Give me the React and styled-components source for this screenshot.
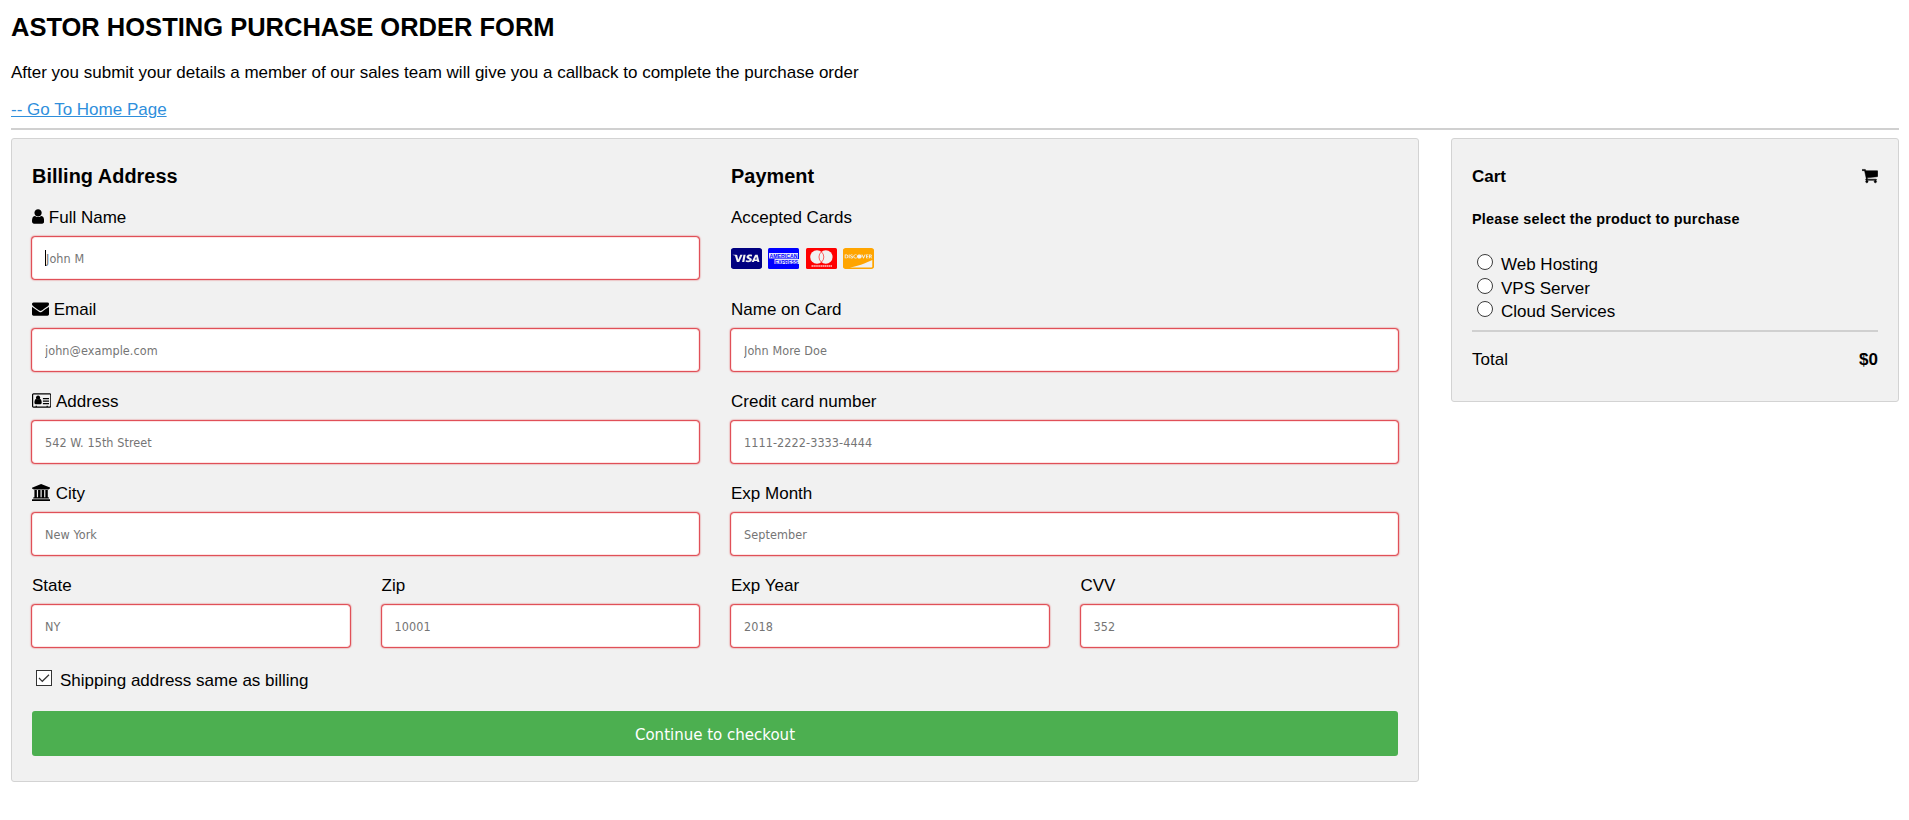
import React from "react";
import styled, { createGlobalStyle } from "styled-components";
import { FaCcVisa, FaCcDiscover } from "react-icons/fa";

const GlobalStyle = createGlobalStyle`
  * { box-sizing: border-box; }
  body {
    margin: 0;
    background: #fff;
    color: #000;
    font-family: Arial, "Liberation Sans", sans-serif;
    font-size: 17px;
    line-height: 20px;
  }
`;

const Page = styled.main`
  padding: 12px 10px 0 11px;
`;

const Title = styled.h2`
  margin: 0 0 21px;
  font-size: 25.5px;
  line-height: 30px;
`;

const Intro = styled.p`
  margin: 0 0 17px;
`;

const HomeLink = styled.a`
  display: block;
  width: max-content;
  color: #2f8fdc;
  text-decoration: underline;
`;

const Rule = styled.hr`
  height: 2px;
  margin: ${(p) => p.$margin};
  border: 0;
  background: #d0d0d0;
`;

const Columns = styled.div`
  display: grid;
  grid-template-columns: ${(p) => p.$template || "1fr 1fr"};
  column-gap: 32px;
  align-items: start;
`;

const Panel = styled.section`
  padding: 5px 20px 15px;
  background: #f1f1f1;
  border: 1px solid #d3d3d3;
  border-radius: 3px;
`;

const SectionTitle = styled.h3`
  margin: 21px 0 19px;
  font-size: 19.89px;
  line-height: 23px;
  letter-spacing: 0.04px;
`;

const Label = styled.label`
  display: block;
  padding-top: 1px;
  margin-bottom: 9px;
  height: 21px;
  white-space: nowrap;
`;

const Glyph = styled.svg`
  display: inline-block;
  width: ${(p) => p.$width}px;
  height: 17px;
  margin-right: ${(p) => p.$gap || 0}px;
  vertical-align: -2.43px;
  fill: currentColor;
  stroke: currentColor;
  stroke-width: ${(p) => p.$weight || 0};
`;

const InputWrap = styled.div`
  position: relative;
  margin-bottom: 20px;
`;

const TextInput = styled.input`
  display: block;
  width: 100%;
  height: 42px;
  padding: 1px 12px 0 ${(p) => (p.$active ? 13 : 12)}px;
  border: 1px solid #fde4e4;
  border-radius: 3px;
  background: #fff;
  box-shadow: 0 0 1.5px 1px #dc2a33;
  font-family: Tahoma, "DejaVu Sans Condensed", "DejaVu Sans", sans-serif;
  font-stretch: condensed;
  font-size: 12.5px;
  letter-spacing: 0.08px;
  outline: none;
  &::placeholder { color: #757575; opacity: 1; }
`;

const Caret = styled.span`
  position: absolute;
  left: 13px;
  top: 13px;
  width: 1px;
  height: 16px;
  background: #000;
`;

const CardList = styled.div`
  display: flex;
  gap: 6.4px;
  height: 42px;
  margin-bottom: 20px;
  padding-top: 11px;
`;

const CardSvg = styled.svg`
  display: block;
  width: 31px;
  height: 21px;
  overflow: visible;
  color: ${(p) => p.$color};
`;

const CheckRow = styled.label`
  display: flex;
  align-items: flex-end;
  height: 20px;
  gap: 8px;
  padding-left: 4px;
  margin: 4px 0 20px;
`;

const CheckBox = styled.svg`
  width: 16px;
  height: 16px;
  margin-bottom: 5px;
  flex: none;
`;

const Submit = styled.button`
  display: block;
  width: 100%;
  height: 45px;
  margin: 0 0 10px;
  padding: 1px 0 0;
  border: 0;
  border-radius: 3px;
  background: #4caf50;
  color: #fff;
  font-family: Tahoma, "DejaVu Sans Condensed", "DejaVu Sans", sans-serif;
  font-stretch: condensed;
  font-size: 16.7px;
`;

const CartHeader = styled.h4`
  display: flex;
  justify-content: space-between;
  align-items: baseline;
  margin: 23px 0 24px;
  font-size: 17px;
  height: 20px;
`;

const Prompt = styled.h5`
  margin: 0 0 26px;
  font-size: 14.4px;
  line-height: 16px;
  letter-spacing: 0.23px;
`;

const Option = styled.label`
  display: flex;
  align-items: center;
  height: 23.5px;
  padding: 1px 0 0 5px;
`;

const Radio = styled.input`
  appearance: none;
  width: 16px;
  height: 16px;
  margin: 0 8px 6px 0;
  border: 1px solid #3c3c3c;
  border-radius: 50%;
  background: #fff;
`;

const TotalRow = styled.p`
  display: flex;
  justify-content: space-between;
  margin: 0 0 16px;
`;

const GLYPHS = {
  user: {
    box: "256 0 1280 1792",
    width: 12.14,
    d: "M1536 1399q0 109-62.5 187t-150.5 78h-854q-88 0-150.5-78t-62.5-187q0-85 8.5-160.5t31.5-152 58.5-131 94-89 134.5-34.5q131 128 313 128t313-128q76 0 134.5 34.5t94 89 58.5 131 31.5 152 8.5 160.5zm-256-887q0 159-112.5 271.5t-271.5 112.5-271.5-112.5-112.5-271.5 112.5-271.5 271.5-112.5 271.5 112.5 112.5 271.5z",
  },
  envelope: {
    box: "0 0 1792 1792",
    width: 17,
    d: "M1792 710v794q0 66-47 113t-113 47h-1472q-66 0-113-47t-47-113v-794q44 49 101 87 362 246 497 345 57 42 92.5 65.5t94.5 48 110 24.5h2q51 0 110-24.5t94.5-48 92.5-65.5q170-123 498-345 57-39 100-87zm0-294q0 79-49 151t-122 123q-376 261-468 325-10 7-42.5 31t-54 38.5-52 32.5-57.5 27-50 9h-2q-23 0-50-9t-57.5-27-52-32.5-54-38.5-42.5-31q-91-64-262-182.5t-205-142.5q-62-42-117-115.5t-55-136.5q0-78 41.5-130t118.5-52h1472q65 0 112.5 47t47.5 113z",
  },
  card: {
    box: "0 0 2048 1792",
    width: 19.43,
    gap: 0.8,
    d: "M160 128h1728q66 0 113 47t47 113v1216q0 66-47 113t-113 47h-1728q-66 0-113-47t-47-113v-1216q0-66 47-113t113-47zM160 256q-32 0-32 32v1216q0 32 32 32h224v-96h128v96h1024v-96h128v96h224q32 0 32-32v-1216q0-32-32-32zM1024 1131q0 64-37 107t-92 43h-510q-55 0-92-43t-37-107q0-162 42-270t140-113q85 78 202 78t202-78q98 5 140 113t42 270zM867 596q0 94-67 160t-160 66-160-66-67-160 67-160 160-66 160 66 67 160zM1152 1152h640v128h-640zM1152 896h640v128h-640zM1152 640h640v128h-640z",
  },
  bank: {
    box: "-128 0 1920 1792",
    width: 18.21,
    gap: 0.8,
    d: "M832 0l960 384v128h-128q0 26-20.5 45t-48.5 19h-1526q-28 0-48.5-19t-20.5-45h-128v-128zm-704 640h256v768h128v-768h256v768h128v-768h256v768h128v-768h256v768h59q28 0 48.5 19t20.5 45v64h-1664v-64q0-26 20.5-45t48.5-19h59v-768zm1595 960q28 0 48.5 19t20.5 45v128h-1920v-128q0-26 20.5-45t48.5-19h1782z",
  },
  cart: {
    box: "64 0 1664 1792",
    width: 15.79,
    weight: 50,
    d: "M704 1536q0 52-38 90t-90 38-90-38-38-90 38-90 90-38 90 38 38 90zm896 0q0 52-38 90t-90 38-90-38-38-90 38-90 90-38 90 38 38 90zm128-1088v512q0 24-16.5 42.5t-40.5 21.5l-1044 122q13 60 13 70 0 16-24 64h920q26 0 45 19t19 45-19 45-45 19h-1024q-26 0-45-19t-19-45q0-11 8-31.5t16-36 21.5-40 15.5-29.5l-177-823h-204q-26 0-45-19t-19-45 19-45 45-19h256q16 0 28.5 6.5t19.5 15.5 13 24.5 8 26 5.5 29.5 4.5 26h1201q26 0 45 19t19 45z",
  },
};

function Icon({ name }) {
  const g = GLYPHS[name];
  return (
    <Glyph viewBox={g.box} $width={g.width} $gap={g.gap} $weight={g.weight} aria-hidden="true">
      <path d={g.d} fillRule={name === "card" ? "evenodd" : "nonzero"} />
    </Glyph>
  );
}

function Field({ label, icon, placeholder, caret }) {
  return (
    <div>
      <Label>
        {icon && <><Icon name={icon} />{" "}</>}
        {label}
      </Label>
      <InputWrap>
        <TextInput type="text" placeholder={placeholder} $active={caret} />
        {caret && <Caret />}
      </InputWrap>
    </div>
  );
}

function AcceptedCards() {
  const crop = { viewBox: "0 32 576 448", preserveAspectRatio: "none" };
  return (
    <CardList>
      <CardSvg as={FaCcVisa} {...crop} width="31" height="21" color="navy" />
      <CardSvg viewBox="0 0 31 21" role="img" aria-label="American Express">
        <rect width="31" height="21" rx="1.5" fill="blue" />
        <rect x="1" y="5" width="29" height="5.4" fill="#e4e4fb" />
        <rect x="6.5" y="11" width="24.5" height="5" fill="#e4e4fb" />
        <g fill="blue" fontFamily="Liberation Sans, sans-serif" fontWeight="700" fontSize="6">
          <text x="1.5" y="9.9" textLength="28" lengthAdjust="spacingAndGlyphs">AMERICAN</text>
          <text x="7" y="15.7" textLength="23" lengthAdjust="spacingAndGlyphs">EXPRESS</text>
        </g>
      </CardSvg>
      <CardSvg viewBox="0 0 31 21" role="img" aria-label="MasterCard">
        <rect width="31" height="21" rx="1.5" fill="red" />
        <circle cx="11" cy="9" r="6.8" fill="#f1f1f1" />
        <circle cx="19.8" cy="9" r="6.8" fill="#f1f1f1" />
        <path d="M15.4 3.8a6.8 6.8 0 0 1 0 10.4a6.8 6.8 0 0 1 0-10.4z" fill="#f1f1f1" stroke="red" strokeWidth=".6" />
        <path d="M5.5 18h20.5" stroke="#ffc4c4" strokeWidth="1.4" strokeDasharray="1.5 .4" />
      </CardSvg>
      <CardSvg as={FaCcDiscover} {...crop} width="31" height="21" color="orange" />
    </CardList>
  );
}

export default function App() {
  return (
    <>
      <GlobalStyle />
      <Page>
        <Title>ASTOR HOSTING PURCHASE ORDER FORM</Title>
        <Intro>
          After you submit your details a member of our sales team will give you a callback to complete the purchase order
        </Intro>
        <HomeLink href="#">-- Go To Home Page</HomeLink>
        <Rule $margin="8px 0 8px" />
        <Columns $template="1408px 1fr">
          <Panel>
            <Columns>
              <div>
                <SectionTitle>Billing Address</SectionTitle>
                <Field icon="user" label="Full Name" placeholder="John M" caret />
                <Field icon="envelope" label="Email" placeholder="john@example.com" />
                <Field icon="card" label="Address" placeholder="542 W. 15th Street" />
                <Field icon="bank" label="City" placeholder="New York" />
                <Columns>
                  <Field label="State" placeholder="NY" />
                  <Field label="Zip" placeholder="10001" />
                </Columns>
              </div>
              <div>
                <SectionTitle>Payment</SectionTitle>
                <Label>Accepted Cards</Label>
                <AcceptedCards />
                <Field label="Name on Card" placeholder="John More Doe" />
                <Field label="Credit card number" placeholder="1111-2222-3333-4444" />
                <Field label="Exp Month" placeholder="September" />
                <Columns>
                  <Field label="Exp Year" placeholder="2018" />
                  <Field label="CVV" placeholder="352" />
                </Columns>
              </div>
            </Columns>
            <CheckRow>
              <CheckBox viewBox="0 0 16 16" role="checkbox" aria-checked="true">
                <rect x=".5" y=".5" width="15" height="15" fill="#fff" stroke="#333" />
                <path d="M3 8l3.3 3.3L13 4.8" fill="none" stroke="#333" strokeWidth="1.2" />
              </CheckBox>
              Shipping address same as billing
            </CheckRow>
            <Submit>Continue to checkout</Submit>
          </Panel>
          <Panel>
            <CartHeader>
              Cart <span><Icon name="cart" /></span>
            </CartHeader>
            <Prompt>Please select the product to purchase</Prompt>
            {["Web Hosting", "VPS Server", "Cloud Services"].map((name) => (
              <Option key={name}>
                <Radio type="radio" name="product" />
                {name}
              </Option>
            ))}
            <Rule $margin="6.5px 0 18px" />
            <TotalRow>
              Total <b>$0</b>
            </TotalRow>
          </Panel>
        </Columns>
      </Page>
    </>
  );
}
